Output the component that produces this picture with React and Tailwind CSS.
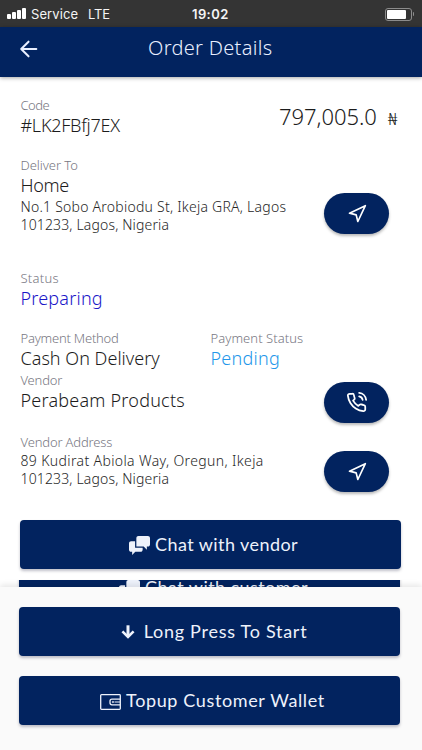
const body = "font-['Noto_Sans',sans-serif] font-light";

function Label({ children, className = "" }) {
  return <div className={`h-[17px] whitespace-nowrap text-[13px] leading-[17px] text-[#777782] ${className}`}>{children}</div>;
}

function Value({ children, className = "leading-[25px] text-[#1c1c1c]" }) {
  return <div className={`h-[25px] whitespace-nowrap text-[18px] ${className}`}>{children}</div>;
}

function Pill({ children, className = "" }) {
  return (
    <button className={`flex h-[41px] w-[65px] shrink-0 items-center justify-center rounded-full bg-[#02235f] text-white shadow-[0_2px_3px_rgba(0,0,0,0.28)] ${className}`}>
      {children}
    </button>
  );
}

function WideButton({ icon, children, className = "" }) {
  return (
    <button className={`flex h-[49px] w-[381px] shrink-0 items-center justify-center rounded-[4px] bg-[#02235f] text-[#eef2fb] shadow-[0_2px_3px_rgba(0,0,40,0.25)] ${className}`}>
      {icon}
      <span className="mb-[2px] whitespace-nowrap font-['Lato',sans-serif] text-[18px] font-normal leading-6">{children}</span>
    </button>
  );
}

function SendIcon() {
  return (
    <svg width="20" height="20" viewBox="0 0 24 24" fill="none" stroke="currentColor" strokeWidth="2" strokeLinejoin="round">
      <path d="M3 11 22 2l-9 19-2-8z" />
    </svg>
  );
}

function PhoneIcon() {
  return (
    <svg width="21" height="21" viewBox="0 0 24 24" fill="none" stroke="currentColor" strokeWidth="2" strokeLinecap="round" strokeLinejoin="round">
      <path d="M15.05 5A5 5 0 0 1 19 8.95M15.05 1A9 9 0 0 1 23 8.94m-1 7.98v3a2 2 0 0 1-2.18 2 19.79 19.79 0 0 1-8.63-3.07 19.5 19.5 0 0 1-6-6 19.79 19.79 0 0 1-3.07-8.67A2 2 0 0 1 4.11 2h3a2 2 0 0 1 2 1.72 12.84 12.84 0 0 0 .7 2.81 2 2 0 0 1-.45 2.11L8.09 9.91a16 16 0 0 0 6 6l1.27-1.27a2 2 0 0 1 2.11-.45 12.84 12.84 0 0 0 2.81.7A2 2 0 0 1 22 16.92z" />
    </svg>
  );
}

function ChatIcon({ className = "" }) {
  return (
    <svg className={className} width="21" height="21" viewBox="0 0 20 20" fill="currentColor">
      <path d="M5.8 12.2V6H2C.9 6 0 6.9 0 8v6c0 1.1.9 2 2 2h1v3l3-3h5c1.1 0 2-.9 2-2v-1.82a.943.943 0 0 1-.2.021h-7V12.2zM18 1H9c-1.1 0-2 .9-2 2v8h7l3 3v-3h1c1.1 0 2-.899 2-2V3c0-1.1-.9-2-2-2z" />
    </svg>
  );
}

function DownIcon() {
  return (
    <svg className="mr-[9px]" width="14" height="14" viewBox="0 0 14 14" fill="none" stroke="currentColor">
      <path d="M7 .3v10.700" strokeWidth="3" />
      <path d="M1.400 6.300 7 11.900l5.600-5.600" strokeWidth="2.600" />
    </svg>
  );
}

function WalletIcon() {
  return (
    <svg className="mr-[5px] mt-[2px]" width="21" height="16" viewBox="0 0 21 16" fill="none" stroke="currentColor" strokeWidth="1.3">
      <rect x=".7" y=".7" width="19.600" height="14.600" rx=".8" />
      <path d="M20.300 5.200h-8.300a2 2 0 0 0-2 2v1.600a2 2 0 0 0 2 2h8.300" />
      <circle cx="12.900" cy="8" r=".7" strokeWidth=".9" />
      <path d="M14.500 8h5.500" strokeWidth="1" />
    </svg>
  );
}

function StatusBar() {
  return (
    <div className="flex h-[27px] shrink-0 items-center bg-[#343434] font-['Inter',sans-serif] text-[13px] font-normal leading-4 text-[#f5f5f5]">
      <div className="flex w-[192px] items-center pl-[7px]">
        <div className="flex h-[11px] w-[19px] items-end justify-between">
          <i className="h-[5px] w-[4px] rounded-[1px] bg-white" />
          <i className="h-[7px] w-[4px] rounded-[1px] bg-white" />
          <i className="h-[9px] w-[4px] rounded-[1px] bg-white" />
          <i className="h-[11px] w-[4px] rounded-[1px] bg-white" />
        </div>
        <span className="ml-[5px] tracking-[0.090px]">Service</span>
        <span className="ml-[10px] tracking-[-0.160px]">LTE</span>
      </div>
      <span className="font-semibold tracking-[0.400px]">19:02</span>
      <div className="ml-auto mr-[8px] mt-px flex items-center">
        <div className="flex h-[13px] w-[27px] rounded-[3px] border border-[#8c8c8c] p-px">
          <div className="w-[19px] rounded-[1px] bg-white" />
        </div>
        <div className="ml-px h-[4px] w-[1.500px] rounded-r bg-[#8c8c8c]" />
      </div>
    </div>
  );
}

export default function App() {
  return (
    <div className={`flex h-[750px] w-[422px] flex-col overflow-hidden bg-white ${body}`}>
      <StatusBar />
      <header className="z-10 flex h-[50px] shrink-0 items-center bg-[#02235f] pb-[9px] text-[#e9efff] shadow-[0_1px_4px_rgba(0,0,0,0.35)]">
        <svg className="ml-[18px] mt-[3px]" width="22" height="22" viewBox="0 0 24 24" fill="none" stroke="currentColor" strokeWidth="2.200" strokeLinecap="round" strokeLinejoin="round">
          <path d="M20 12H3.500M11.500 20l-8-8 8-8" />
        </svg>
        <h1 className="ml-[108px] whitespace-nowrap text-[20px] leading-7 tracking-[0.300px]">Order Details</h1>
      </header>

      <main className="h-[503px] shrink-0 overflow-hidden pl-[20.500px] pt-[19px] text-[#262626]">
        <section className="flex h-[42px] w-[377px] justify-between">
          <div>
            <Label className="pt-px tracking-[-0.500px]">Code</Label>
            <Value className="leading-[25px] tracking-[-0.260px] text-[#1c1c1c]">#LK2FBfj7EX</Value>
          </div>
          <div className="flex items-baseline pt-[5px] text-[#1c1c1c]">
            <span className="text-[22px] leading-[30px] tracking-[-0.050px]">797,005.0</span>
            <span className="ml-[11px] text-[17px] font-light">₦</span>
          </div>
        </section>

        <section className="mt-[18px] flex h-[77px] justify-between">
          <div>
            <Label className="pt-px tracking-[-0.050px]">Deliver To</Label>
            <Value className="leading-[25px] tracking-[-0.300px] text-[#1c1c1c]">Home</Value>
            <p className="whitespace-nowrap text-[14px] leading-[18px]">
              <span className="block tracking-[0.240px]">No.1 Sobo Arobiodu St, Ikeja GRA, Lagos</span>
              <span className="block tracking-[0.150px]">101233, Lagos, Nigeria</span>
            </p>
          </div>
          <Pill className="mr-[33px] mt-[37px]"><SendIcon /></Pill>
        </section>

        <section className="mt-[36.500px]">
          <Label className="tracking-[0.250px]">Status</Label>
          <Value className="leading-[23px] tracking-[0.200px] text-[#1a16c8]">Preparing</Value>
        </section>

        <section className="mt-[18px] flex">
          <div className="w-[190px]">
            <Label className="tracking-[-0.220px]">Payment Method</Label>
            <Value className="leading-[23px] tracking-[0.020px] text-[#1c1c1c]">Cash On Delivery</Value>
          </div>
          <div>
            <Label className="tracking-[0.060px]">Payment Status</Label>
            <Value className="leading-[23px] tracking-[0.250px] text-[#2397ea]">Pending</Value>
          </div>
        </section>

        <section className="flex justify-between">
          <div>
            <Label className="tracking-[-0.200px]">Vendor</Label>
            <Value className="leading-[23px] tracking-[0.220px] text-[#1c1c1c]">Perabeam Products</Value>
          </div>
          <Pill className="mb-[-10px] mr-[33px] mt-[10.500px]"><PhoneIcon /></Pill>
        </section>

        <section className="mt-[20.500px] flex h-[54px] justify-between">
          <div>
            <Label className="tracking-[-0.160px]">Vendor Address</Label>
            <p className="mt-px whitespace-nowrap text-[14px] leading-[18px]">
              <span className="block tracking-[0.370px]">89 Kudirat Abiola Way, Oregun, Ikeja</span>
              <span className="block tracking-[0.150px]">101233, Lagos, Nigeria</span>
            </p>
          </div>
          <Pill className="mr-[33px] mt-[17px]"><SendIcon /></Pill>
        </section>

        <WideButton className="ml-[-0.500px] mt-[32px] pl-[6px]" icon={<ChatIcon className="mr-[5px] mt-[2px]" />}>
          <span className="tracking-[0.430px]">Chat with vendor</span>
        </WideButton>
      </main>

      <div className="h-[7px] shrink-0 overflow-hidden pl-[19px]">
        <WideButton className="-mt-[17px] pl-[8px]" icon={<ChatIcon className="mr-[5px] mt-[4px]" />}>
          <span className="tracking-[0.430px]">Chat with customer</span>
        </WideButton>
      </div>

      <footer className="flex grow flex-col gap-5 bg-[#fafafa] pl-[19px] pt-[20px] shadow-[0_-2px_6px_rgba(0,0,0,0.1)]">
        <WideButton className="pl-[9px]" icon={<DownIcon />}>
          <span className="tracking-[0.730px]">Long Press To Start</span>
        </WideButton>
        <WideButton className="pl-[6px]" icon={<WalletIcon />}>
          <span className="tracking-[0.630px]">Topup Customer Wallet</span>
        </WideButton>
      </footer>
    </div>
  );
}
